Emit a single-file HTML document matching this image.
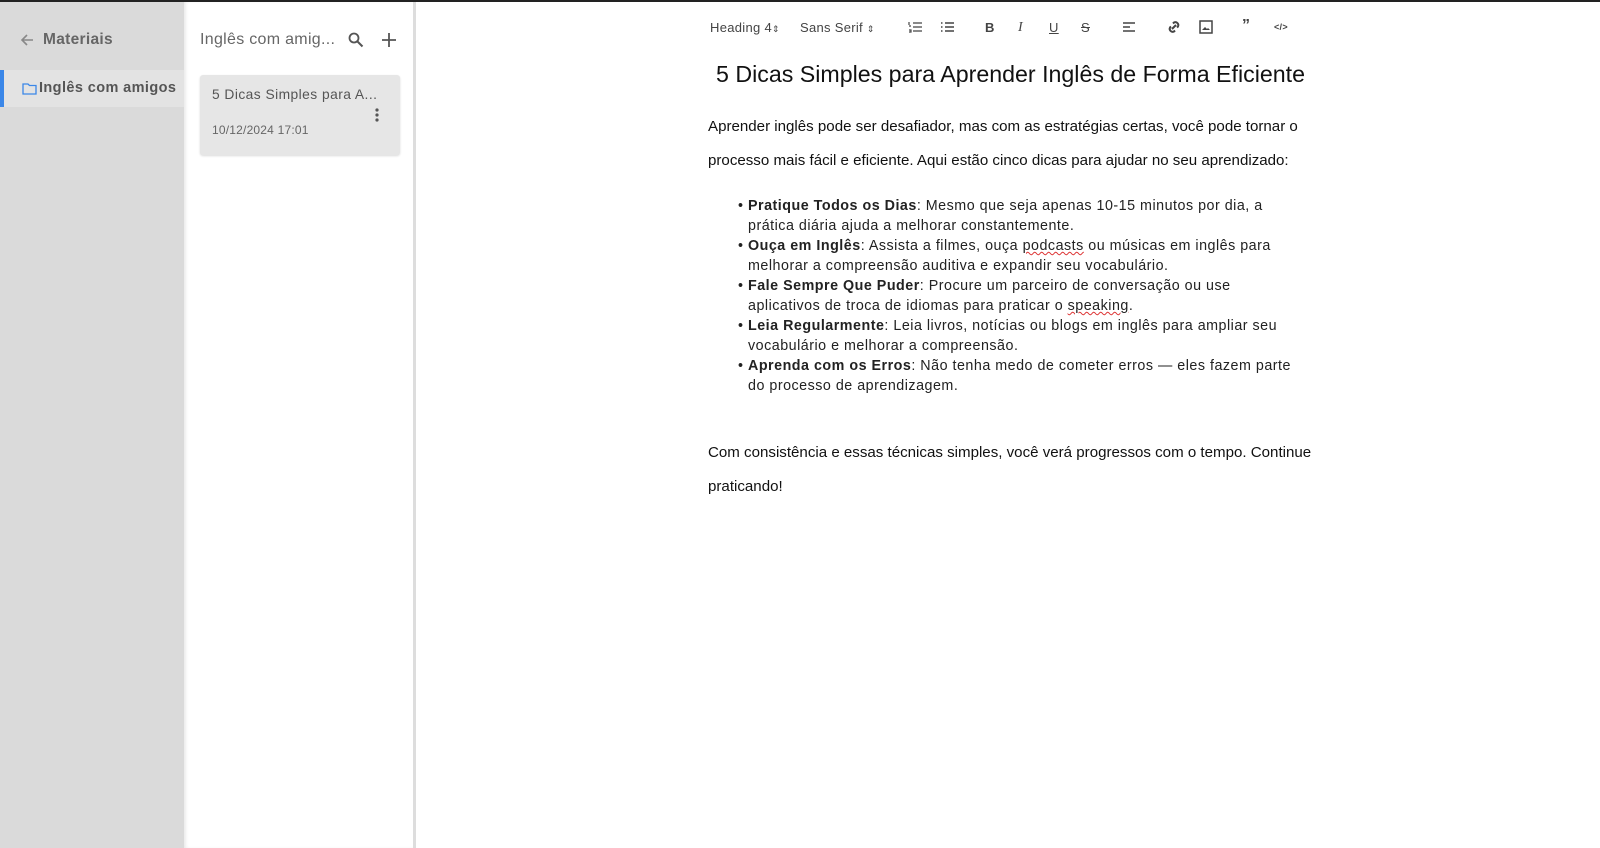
<!DOCTYPE html>
<html><head><meta charset="utf-8"><style>
*{margin:0;padding:0;box-sizing:border-box}
body{width:1600px;height:848px;overflow:hidden;background:#fff;font-family:"Liberation Sans",sans-serif;position:relative;color:#222}
.top{position:absolute;left:0;top:0;width:1600px;height:2px;background:#222}
.left{position:absolute;left:0;top:2px;width:184px;height:846px;background:#dadada}
.mid{position:absolute;left:184px;top:2px;width:230px;height:846px;background:#fff;box-shadow:inset 3px 0 4px -2px rgba(0,0,0,.12)}
.div{position:absolute;left:413px;top:2px;width:3px;height:846px;background:#ddd}
.t{position:absolute;white-space:nowrap}
.sel{position:absolute;left:0;top:70px;width:184px;height:37px;background:#e3e3e3;border-left:4px solid #3b87e8}
.card{position:absolute;left:200px;top:75px;width:200px;height:80px;background:#e6e6e6;border-radius:3px;box-shadow:0 1px 2px rgba(0,0,0,.15)}
.tb{position:absolute;top:20px;font-size:13px;color:#444;letter-spacing:.3px}
ul{position:absolute;left:748px;top:196px;width:600px;list-style:none;font-size:14.3px;line-height:20px;color:#222;letter-spacing:.5px;white-space:nowrap}
li{position:relative}
li:before{content:"•";position:absolute;left:-10px}
.sq{text-decoration:underline wavy #d33;text-decoration-thickness:1px}
p{position:absolute;left:708px;font-size:15.1px;line-height:33.5px;color:#111;width:620px;white-space:nowrap}
</style></head><body>
<div class="top"></div>
<div class="left"></div>
<div class="sel"></div>
<div class="mid"></div>
<div class="div"></div>
<svg class="t" style="left:19px;top:32px" width="16" height="16" viewBox="0 0 16 16"><path d="M14 8H3M8 3L3 8l5 5" stroke="#888" stroke-width="1.6" fill="none"/></svg>
<div class="t" style="left:43px;top:31px;font-size:15.5px;font-weight:bold;color:#666;letter-spacing:.3px">Materiais</div>
<svg class="t" style="left:22px;top:82px" width="15" height="13" viewBox="0 0 15 13"><path d="M1 2h5l1.5 1.5H14V12H1z" stroke="#3b87e8" stroke-width="1.3" fill="none"/></svg>
<div class="t" style="left:39px;top:80px;font-size:14.5px;font-weight:bold;color:#555;letter-spacing:.4px">Inglês com amigos</div>
<div class="t" style="left:200px;top:31px;font-size:16px;color:#666;letter-spacing:.3px">Inglês com amig...</div>
<svg class="t" style="left:347px;top:31px" width="18" height="18" viewBox="0 0 18 18"><circle cx="7" cy="7" r="4.5" stroke="#555" stroke-width="1.8" fill="none"/><path d="M10.5 10.5l5 5" stroke="#555" stroke-width="2"/></svg>
<svg class="t" style="left:381px;top:32px" width="16" height="16" viewBox="0 0 16 16"><path d="M8 1v14M1 8h14" stroke="#555" stroke-width="1.8"/></svg>
<div class="card"></div>
<div class="t" style="left:212px;top:87px;font-size:13.8px;color:#555;letter-spacing:.45px">5 Dicas Simples para A...</div>
<div class="t" style="left:212px;top:123px;font-size:12px;color:#666;letter-spacing:.2px">10/12/2024 17:01</div>
<svg class="t" style="left:374px;top:107px" width="6" height="16"><circle cx="3" cy="3" r="1.6" fill="#555"/><circle cx="3" cy="8" r="1.6" fill="#555"/><circle cx="3" cy="13" r="1.6" fill="#555"/></svg>
<div class="tb" style="left:710px">Heading 4<span style="font-size:9px">⇕</span></div>
<div class="tb" style="left:800px">Sans Serif <span style="font-size:9px">⇕</span></div>
<svg class="t" style="left:908px;top:20px" width="14" height="14" viewBox="0 0 14 14"><path d="M5 3h9M5 7h9M5 11h9M1 2v3M1 6h2M1 10h2v2H1" stroke="#444" stroke-width="1.2" fill="none"/></svg>
<svg class="t" style="left:940px;top:20px" width="14" height="14" viewBox="0 0 14 14"><path d="M5 3h9M5 7h9M5 11h9M1 3h1.5M1 7h1.5M1 11h1.5" stroke="#444" stroke-width="1.4"/></svg>
<div class="tb" style="left:985px;font-weight:bold">B</div>
<div class="tb" style="left:1018px;font-style:italic;font-family:'Liberation Serif',serif;font-size:14px">I</div>
<div class="tb" style="left:1049px;text-decoration:underline">U</div>
<div class="tb" style="left:1081px;text-decoration:line-through">S</div>
<svg class="t" style="left:1122px;top:21px" width="14" height="12" viewBox="0 0 14 12"><path d="M1 2h12M1 6h7M1 10h12" stroke="#444" stroke-width="1.4"/></svg>
<svg class="t" style="left:1167px;top:20px" width="14" height="14" viewBox="0 0 14 14"><path d="M6 3.5l1-1a3 3 0 014 4l-1 1M8 10.5l-1 1a3 3 0 01-4-4l1-1M5 9l4-4" stroke="#444" stroke-width="2" fill="none"/></svg>
<svg class="t" style="left:1199px;top:20px" width="14" height="14" viewBox="0 0 14 14"><rect x="1" y="1" width="12" height="12" stroke="#444" stroke-width="1.5" fill="none"/><path d="M3 10l3-3 2 2 1-1 2 2z" fill="#444"/></svg>
<div class="tb" style="left:1242px;font-weight:bold;font-size:16px;top:17px">”</div>
<div class="tb" style="left:1274px;font-size:9px;top:22px;font-weight:bold">&lt;/&gt;</div>
<div class="t" style="left:716px;top:61px;font-size:23.2px;color:#111">5 Dicas Simples para Aprender Inglês de Forma Eficiente</div>
<p style="top:110px">Aprender inglês pode ser desafiador, mas com as estratégias certas, você pode tornar o<br>processo mais fácil e eficiente. Aqui estão cinco dicas para ajudar no seu aprendizado:</p>
<ul>
<li><b>Pratique Todos os Dias</b>: Mesmo que seja apenas 10-15 minutos por dia, a<br>prática diária ajuda a melhorar constantemente.</li>
<li><b>Ouça em Inglês</b>: Assista a filmes, ouça <span class="sq">podcasts</span> ou músicas em inglês para<br>melhorar a compreensão auditiva e expandir seu vocabulário.</li>
<li><b>Fale Sempre Que Puder</b>: Procure um parceiro de conversação ou use<br>aplicativos de troca de idiomas para praticar o <span class="sq">speaking</span>.</li>
<li><b>Leia Regularmente</b>: Leia livros, notícias ou blogs em inglês para ampliar seu<br>vocabulário e melhorar a compreensão.</li>
<li><b>Aprenda com os Erros</b>: Não tenha medo de cometer erros — eles fazem parte<br>do processo de aprendizagem.</li>
</ul>
<p style="top:436px">Com consistência e essas técnicas simples, você verá progressos com o tempo. Continue<br>praticando!</p>
</body></html>
